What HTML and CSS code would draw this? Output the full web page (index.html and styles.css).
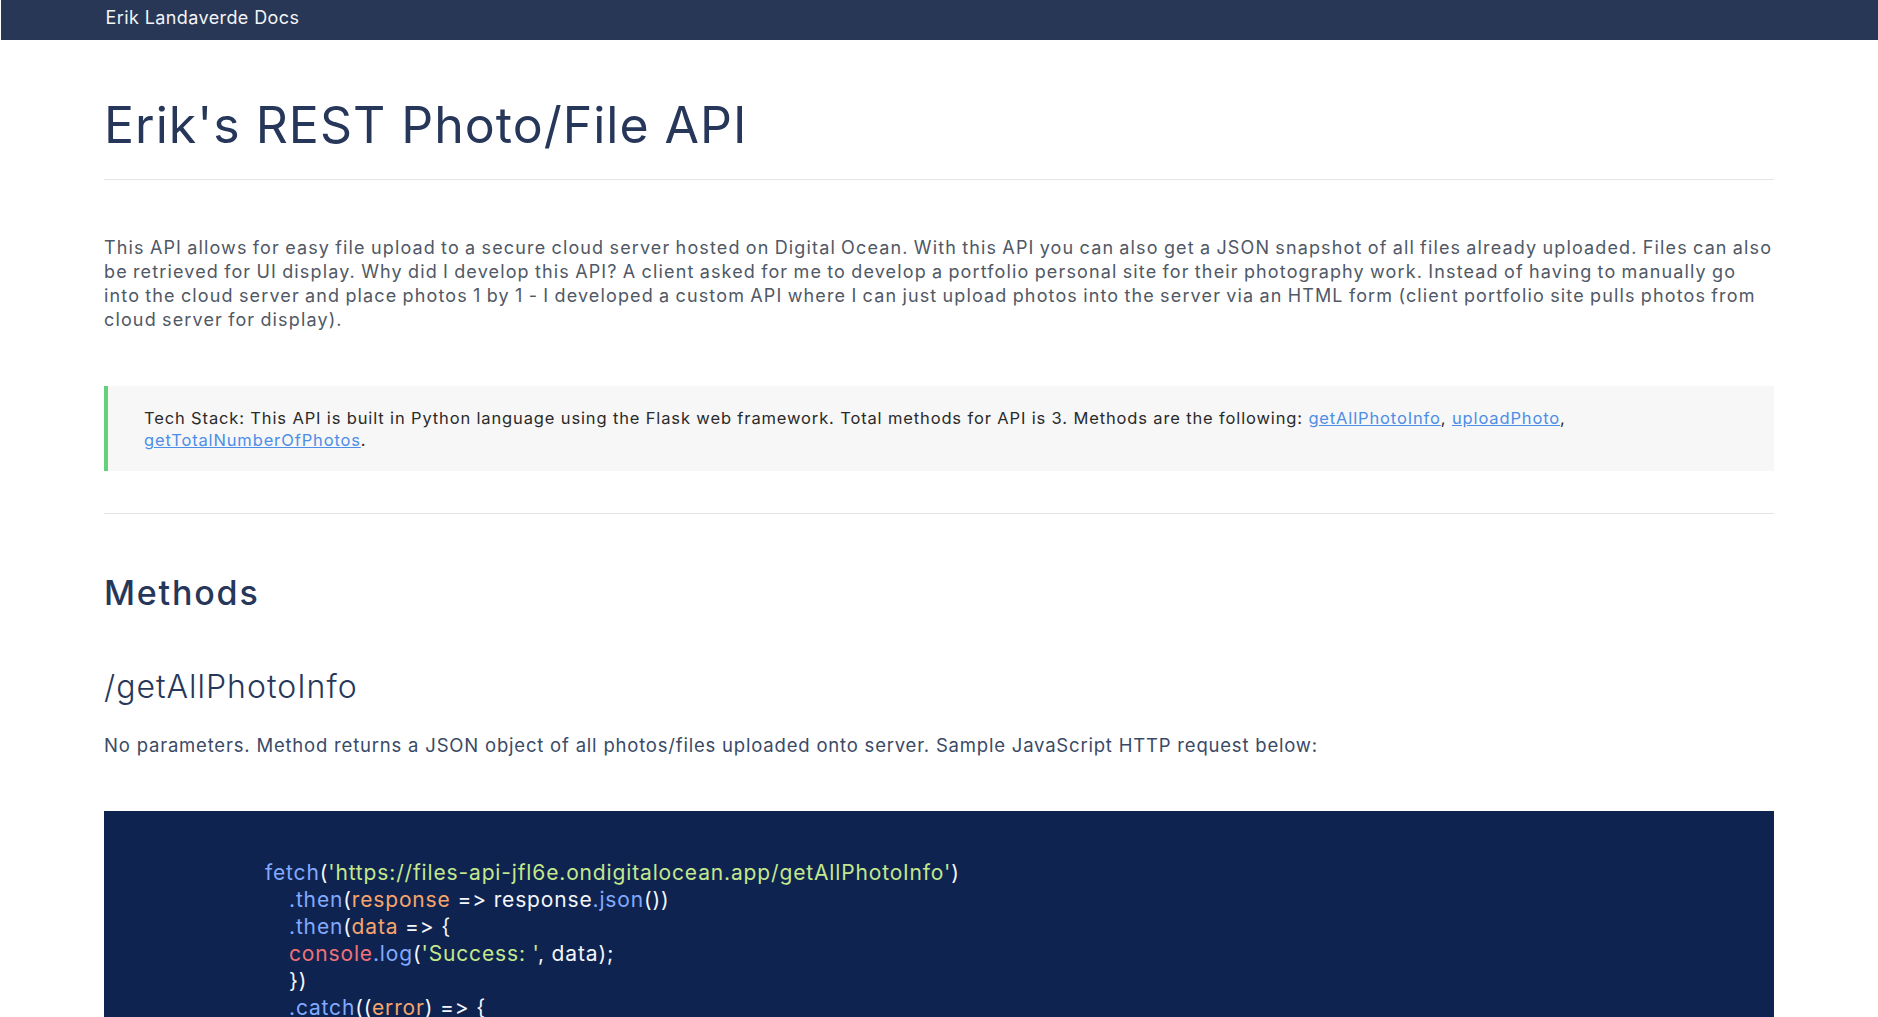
FILE: index.html
```html
<!DOCTYPE html>
<html lang="en">
<head>
<meta charset="utf-8">
<title>Erik's REST Photo/File API</title>
<link rel="stylesheet" href="styles.css">
</head>
<body>
<header class="navbar">
  <div class="container">
    <a class="brand" href="#">Erik Landaverde Docs</a>
  </div>
</header>
<main class="container">
  <h1 class="title">Erik's REST Photo/File API</h1>
  <hr class="rule rule-title">
  <p class="intro">This API allows for easy file upload to a secure cloud server hosted on Digital Ocean. With this API you can also get a JSON snapshot of all files already uploaded. Files can also be retrieved for UI display. Why did I develop this API? A client asked for me to develop a portfolio personal site for their photography work. Instead of having to manually go into the cloud server and place photos 1 by 1 - I developed a custom API where I can just upload photos into the server via an HTML form (client portfolio site pulls photos from cloud server for display).</p>
  <blockquote class="note">Tech Stack: This API is built in Python language using the Flask web framework. Total methods for API is 3. Methods are the following: <a href="#getAllPhotoInfo">getAllPhotoInfo</a>, <a href="#uploadPhoto">uploadPhoto</a>, <a href="#getTotalNumberOfPhotos">getTotalNumberOfPhotos</a>.</blockquote>
  <hr class="rule rule-section">
  <h2 class="section-title">Methods</h2>
  <h3 class="method-title" id="getAllPhotoInfo">/getAllPhotoInfo</h3>
  <p class="method-desc">No parameters. Method returns a JSON object of all photos/files uploaded onto server. Sample JavaScript HTTP request below:</p>
  <div class="code">
    <div class="line"><span class="fn">fetch</span>(<span class="str">'https://files-api-jfl6e.ondigitalocean.app/getAllPhotoInfo'</span>)</div>
    <div class="line indent"><span class="fn">.then</span>(<span class="param">response</span> =&gt; response<span class="fn">.json</span>())</div>
    <div class="line indent"><span class="fn">.then</span>(<span class="param">data</span> =&gt; {</div>
    <div class="line indent"><span class="obj">console</span><span class="fn">.log</span>(<span class="str">'Success: '</span>, data);</div>
    <div class="line indent">})</div>
    <div class="line indent"><span class="fn">.catch</span>((<span class="param">error</span>) =&gt; {</div>
    <div class="line indent"><span class="obj">console</span><span class="fn">.error</span>(<span class="str">'Error: '</span>, error);</div>
    <div class="line indent">});</div>
  </div>
</main>
</body>
</html>
```

FILE: styles.css
```css
* { box-sizing: border-box; }

html, body {
  margin: 0;
  padding: 0;
  background: #ffffff;
}

body {
  font-family: "Inter", "Noto Sans", sans-serif;
  color: #27375a;
}

.container {
  max-width: 1670px;
  margin: 0 auto;
}

.navbar {
  height: 40px;
  background: #293756;
  margin-left: 1px;
  padding-top: 6px;
}

.navbar .container {
  padding-left: 1px;
}

.brand {
  color: #f2f4f7;
  text-decoration: none;
  font-size: 18px;
  letter-spacing: 0.4px;
  line-height: 24px;
  display: block;
}

.title {
  margin: 55px 0 0;
  font-size: 50px;
  line-height: 60px;
  font-weight: 400;
  letter-spacing: 1px;
  color: #27375a;
}

.rule {
  border: 0;
  border-top: 1px solid #e5e5e5;
  margin: 0;
}

.rule-title { margin-top: 24px; }

.intro {
  margin: 56px 0 0;
  font-size: 18px;
  line-height: 24px;
  letter-spacing: 1.14px;
  word-spacing: -1px;
  color: #505865;
}

.note {
  margin: 54px 0 0;
  background: #f7f7f7;
  border-left: 4px solid #62d07c;
  padding: 21px 35px 20px 36px;
  font-size: 16.5px;
  line-height: 22px;
  letter-spacing: 0.86px;
  color: #2a2a2a;
}

.note a {
  color: #4d8ee6;
  text-decoration: underline;
}

.rule-section { margin-top: 42px; }

.section-title {
  margin: 59px 0 0;
  font-size: 34px;
  line-height: 40px;
  font-weight: 500;
  letter-spacing: 1.8px;
  color: #27375a;
}

.method-title {
  margin: 54px 0 0;
  font-size: 32px;
  line-height: 40px;
  font-weight: 300;
  letter-spacing: 1px;
  color: #27375a;
}

.method-desc {
  margin: 24px 0 0;
  font-size: 18.5px;
  line-height: 28px;
  letter-spacing: 0.8px;
  color: #3a4a66;
}

.code {
  margin-top: 52px;
  background: #0f2350;
  padding: 48px 40px 40px 161px;
  font-size: 21px;
  line-height: 27px;
  letter-spacing: 0.85px;
  color: #f4f6fb;
}

.line { white-space: pre; }
.indent { padding-left: 24px; }

.fn { color: #82aaff; }
.str { color: #c3e88d; }
.param { color: #f7a56c; }
.obj { color: #f07178; }
```
